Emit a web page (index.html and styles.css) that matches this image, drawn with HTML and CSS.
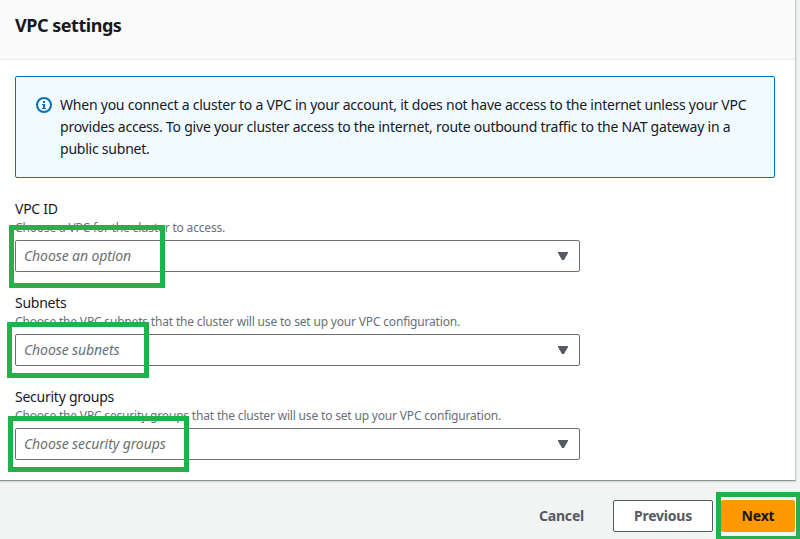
FILE: index.html
```html
<!DOCTYPE html>
<html lang="en">
<head>
<meta charset="utf-8">
<title>VPC settings</title>
<link rel="stylesheet" href="styles.css">
</head>
<body>
<main class="panel">
  <header class="panel-header"><h2><span>VPC settings</span></h2></header>
  <div class="panel-body">
    <div class="alert">
      <svg class="info" viewBox="0 0 16 16" width="16" height="16"><circle cx="8" cy="8" r="7" fill="none" stroke="#0073bb" stroke-width="2"/><path d="M7 4h2v2H7zM6 7h3v4h1v1H6v-1h1V8H6z" fill="#0073bb"/></svg>
      <p><span>When you connect a cluster to a VPC in your account, it does not have access to the internet unless your VPC</span><br><span>provides access. To give your cluster access to the internet, route outbound traffic to the NAT gateway in a</span><br><span>public subnet.</span></p>
    </div>
    <section class="field">
      <label><span>VPC ID</span></label>
      <p class="hint"><span>Choose a VPC for the cluster to access.</span></p>
      <div class="select"><span>Choose an option</span><svg width="10" height="8" viewBox="0 0 10 8"><path d="M0 0h10v1L6 8H4L0 1z" fill="#545b64"/></svg></div>
      <i class="mark mark-vpc"></i>
    </section>
    <section class="field">
      <label><span>Subnets</span></label>
      <p class="hint"><span>Choose the VPC subnets that the cluster will use to set up your VPC configuration.</span></p>
      <div class="select"><span>Choose subnets</span><svg width="10" height="8" viewBox="0 0 10 8"><path d="M0 0h10v1L6 8H4L0 1z" fill="#545b64"/></svg></div>
      <i class="mark mark-subnets"></i>
    </section>
    <section class="field">
      <label><span>Security groups</span></label>
      <p class="hint"><span>Choose the VPC security groups that the cluster will use to set up your VPC configuration.</span></p>
      <div class="select"><span>Choose security groups</span><svg width="10" height="8" viewBox="0 0 10 8"><path d="M0 0h10v1L6 8H4L0 1z" fill="#545b64"/></svg></div>
      <i class="mark mark-groups"></i>
    </section>
  </div>
</main>
<footer class="actions">
  <button class="link"><span>Cancel</span></button>
  <button class="normal"><span>Previous</span></button>
  <div class="next-wrap"><button class="primary"><span>Next</span></button><i class="mark mark-next"></i></div>
</footer>
</body>
</html>
```

FILE: styles.css
```css
* { box-sizing: border-box; }
body { margin: 0; height: 539px; overflow: hidden; background: #f2f3f3; color: #16191f; font: 14px/22px "Noto Sans", "Open Sans", sans-serif; }
h2, p { margin: 0; }
span { white-space: nowrap; }
.panel { width: 796px; height: 481px; background: #fff; border-right: 1px solid #c5cccd; border-bottom: 1px solid #879596; box-shadow: 0 1px 1px #d5dbdb, 1px 0 1px #e6e9e9; }
.panel-header { height: 60px; padding: 14px 15px; background: #fafafa; border-bottom: 1px solid #eaeded; }
h2 { font-size: 18px; line-height: 22px; font-weight: 700; letter-spacing: -.47px; }
.panel-body { padding: 16px 20px 0 15px; }
.alert { display: flex; height: 102px; padding: 17px 20px; gap: 8px; background: #f1faff; border: 1px solid #0073bb; border-radius: 2px; margin-bottom: 20px; letter-spacing: -.228px; }
.info { margin-top: 3px; flex: none; }
.field { position: relative; width: 565px; height: 94px; }
.field label { display: block; height: 22px; letter-spacing: -.25px; }
.hint { font-size: 12px; line-height: 16px; height: 20px; color: #687078; letter-spacing: -.175px; }
.select { display: flex; align-items: center; justify-content: space-between; height: 32px; padding: 0 11px 0 8px; background: #fff; border: 1px solid #687078; border-radius: 2px; color: #687078; font-style: italic; letter-spacing: -.1px; }
.mark { position: absolute; border: 5px solid #24b14c; }
.mark-vpc { left: -6px; top: 27px; width: 156px; height: 63px; }
.mark-subnets { left: -8px; top: 30px; width: 142px; height: 56px; }
.mark-groups { left: -7px; top: 30px; width: 181px; height: 56px; }
.actions { display: flex; justify-content: flex-end; gap: 8px; padding: 19px 5px 0 0; }
button { height: 32px; padding: 0; border: 1px solid transparent; border-radius: 2px; background: transparent; color: #545b64; font: 700 14px/20px "Noto Sans", "Open Sans", sans-serif; letter-spacing: -.2px; }
.link { width: 87px; }
.normal { width: 100px; background: #fff; border-color: #545b64; }
.primary { display: block; width: 74px; background: #ff9900; border-color: #ff9900; color: #16191f; }
.next-wrap { position: relative; }
.mark-next { left: -5px; top: -8px; width: 85px; height: 49px; }
```
